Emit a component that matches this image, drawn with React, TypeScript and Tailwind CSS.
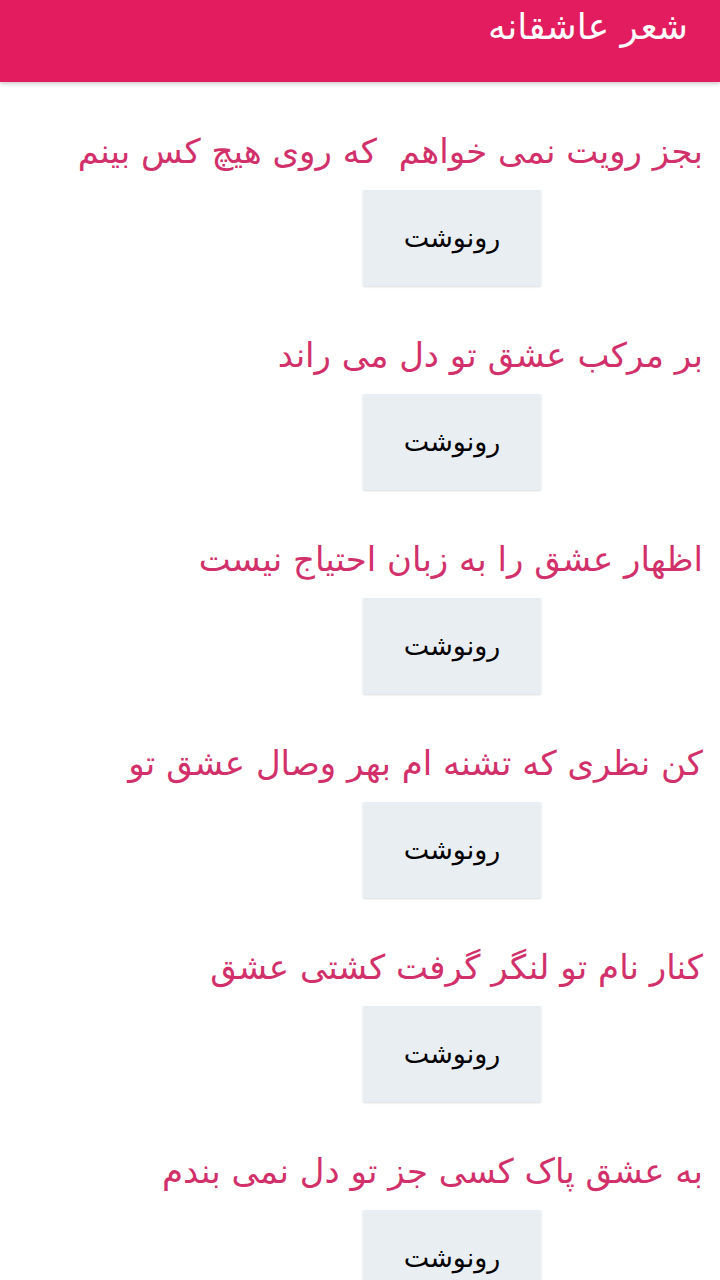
const poems = [
  'بجز رویت نمی خواهم  که روی هیچ کس بینم',
  'بر مرکب عشق تو دل می راند',
  'اظهار عشق را به زبان احتیاج نیست',
  'کن نظری که تشنه ام بهر وصال عشق تو',
  'کنار نام تو لنگر گرفت کشتی عشق',
  'به عشق پاک کسی جز تو دل نمی بندم',
];

export default function App() {
  return (
    <div
      dir="rtl"
      className="w-[720px] h-[1280px] overflow-hidden bg-white"
      style={{ fontFamily: '"DejaVu Sans", sans-serif' }}
    >
      <header className="h-[82px] bg-[#e31c5f] shadow-[0_2px_4px_rgba(0,0,0,0.2)] pr-[32px] pt-[5px]">
        <h1 className="text-white text-[36px] leading-[44px]">شعر عاشقانه</h1>
      </header>

      <main className="flex flex-col pt-[45px]">
        {poems.map((line, i) => (
          <section key={i} className="flex flex-col pb-[45px]">
            <p className="h-[56px] pr-[17px] text-[34px] leading-[48px] text-[#d2306a] whitespace-pre">
              {line}
            </p>
            <div className="flex mt-[7px] pr-[179px]">
              <button className="w-[178px] h-[96px] bg-[#e9eef3] text-black text-[27px] shadow-[0_1px_2px_rgba(0,0,0,0.15)]">
                رونوشت
              </button>
            </div>
          </section>
        ))}
      </main>
    </div>
  );
}
